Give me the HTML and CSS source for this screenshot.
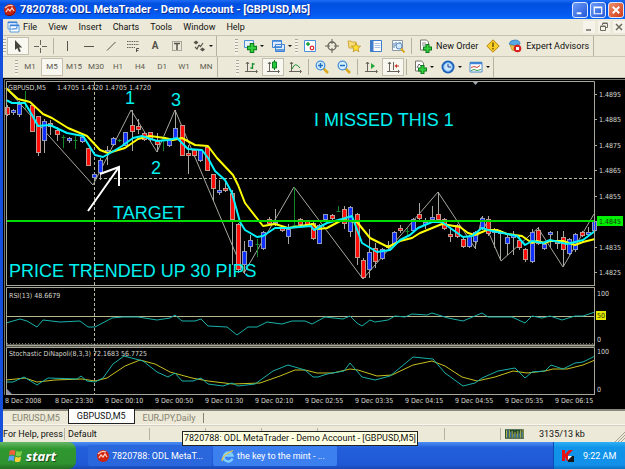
FILE: index.html
```html
<!DOCTYPE html>
<html lang="en">
<head>
<meta charset="utf-8">
<title>7820788: ODL MetaTrader - Demo Account - [GBPUSD,M5]</title>
<link rel="stylesheet" href="styles.css">
</head>
<body>
<div class="app">
  <header class="title-bar">
    <svg class="icon" viewBox="0 0 14 14"><circle cx="7" cy="7" r="6" fill="#c4200c"/><path d="M2 5q4-4 8-2M3 9l2-3 2 2 2-3 2 3" fill="none" stroke="#ffd0c0" stroke-width="1.3"/><path d="M2 11q5 4 10-2" fill="none" stroke="#701008"/></svg>
    <h1>7820788: ODL MetaTrader - Demo Account - [GBPUSD,M5]</h1>
    <button class="win" aria-label="Minimize"><svg viewBox="0 0 15 15"><path d="M4 11h5" stroke="#fff" stroke-width="2"/></svg></button>
    <button class="win" aria-label="Maximize"><svg viewBox="0 0 15 15"><path d="M3.5 4.500h8v7h-8zM3.500 5h8" fill="none" stroke="#fff" stroke-width="1.300"/></svg></button>
    <button class="win close" aria-label="Close"><svg viewBox="0 0 15 15"><path d="M4 4l7 7M11 4l-7 7" stroke="#fff" stroke-width="2"/></svg></button>
  </header>

  <div class="frame">
    <nav class="menu-bar">
      <svg class="icon" viewBox="0 0 14 14"><path d="M2 2h9v7h-9zM4 5h9v7h-9z" fill="#fff" stroke="#5b9be0"/><path d="M2 2.500h9M4 5.500h9" stroke="#3a82dc" stroke-width="1.500"/><path d="M6 10l2-2 1 1 2-2" fill="none" stroke="#6aa3e0"/></svg>
      <button>File</button><button>View</button><button>Insert</button><button>Charts</button><button>Tools</button><button>Window</button><button>Help</button>
      <div class="mdi">
        <button aria-label="Minimize chart"><svg viewBox="0 0 12 12"><path d="M3 9h5" stroke="#6d6a5c" stroke-width="1.500"/></svg></button>
        <button aria-label="Restore chart"><svg viewBox="0 0 12 12"><path d="M4.500 4V2.500h5v4H8M2.500 5.500h5v4h-5zM2.500 5h5M4.500 2h5" fill="none" stroke="#6d6a5c"/></svg></button>
        <button aria-label="Close chart"><svg viewBox="0 0 12 12"><path d="M3 3l6 6M9 3l-6 6" stroke="#6d6a5c" stroke-width="1.500"/></svg></button>
      </div>
    </nav>

    <div class="toolbar">
      <div class="group">
        <i class="grip"></i>
        <button class="tool on" aria-label="Cursor"><svg class="icon" viewBox="0 0 14 14"><path d="M4 1v10l2.300-2 1.700 4 1.800-.8L8 8.500h3.200z" fill="#454540"/></svg></button>
        <button class="tool" aria-label="Crosshair"><svg class="icon" viewBox="0 0 14 14"><path d="M7.500 1v5M7.500 9v5M1 7.500h5M9 7.500h5" stroke="#66645a"/></svg></button>
        <i class="sep"></i>
        <button class="tool" aria-label="Vertical line"><svg class="icon" viewBox="0 0 14 14"><path d="M7.500 2v10" stroke="#55534a"/></svg></button>
        <button class="tool" aria-label="Horizontal line"><svg class="icon" viewBox="0 0 14 14"><path d="M2 7.500h10" stroke="#55534a"/></svg></button>
        <button class="tool" aria-label="Trendline"><svg class="icon" viewBox="0 0 14 14"><path d="M3 11.500L11.500 3" stroke="#55534a"/></svg></button>
        <button class="tool" aria-label="Fibonacci"><svg class="icon" viewBox="0 0 14 14"><path d="M1 2.500h12M1 5.500h12M1 8.500h8" stroke="#66645a" stroke-dasharray="1.500 .8"/><path d="M10.500 13V9.500H13M10.500 11.500h2" fill="none" stroke="#55534a"/></svg></button>
        <button class="tool" aria-label="Text"><b class="glyph">A</b></button>
        <button class="tool" aria-label="Text label"><svg class="icon" viewBox="0 0 14 14"><path d="M2.500 2.500h9v9h-9z" fill="none" stroke="#66645a" stroke-dasharray="1 1"/><path d="M4 4.500h6M7 4.500V11" stroke="#55534a" stroke-width="1.500"/></svg></button>
        <button class="tool drop" aria-label="Arrows"><svg class="icon" viewBox="0 0 14 14"><path d="M1.500 3.500L4 1.500l2.500 2L4 5.500zM8 10.500l2.500-2 2.500 2-2.500 2z" fill="#55534a"/><path d="M3 8l2 2 2-4M7 6l1.500 1.500L11 4" fill="none" stroke="#55534a" stroke-width="1.200"/></svg><i class="caret"></i></button>
        <i class="edge"></i>
      </div>
      <div class="group">
        <i class="grip"></i>
        <button class="tool drop" aria-label="New chart"><svg class="icon" viewBox="0 0 14 14"><path d="M1.500 1.500h9v7h-9z" fill="#e8f2ff" stroke="#4a8ed8"/><path d="M9 4v10M4 9h10" stroke="#0a7a18" stroke-width="4.500"/><path d="M9 5v8M5 9h8" stroke="#35d040" stroke-width="2.500"/></svg><i class="caret"></i></button>
        <button class="tool drop" aria-label="Profiles"><svg class="icon" viewBox="0 0 14 14"><path d="M1.500 1.500h9v7h-9zM4.500 5.500h9v7h-9z" fill="#dcebff" stroke="#3f84d4"/><path d="M1.500 2h9M3 8h8M4.500 11h9" stroke="#3f84d4" stroke-width="1.500"/></svg><i class="caret"></i></button>
        <i class="grip"></i>
        <button class="tool" aria-label="Market watch"><svg class="icon" viewBox="0 0 14 14"><path d="M1.500 1.500h11v11h-11z" fill="#fff" stroke="#4a90dd"/><path d="M5 3v4M3 5h4" stroke="#12a030" stroke-width="1.500"/><circle cx="9" cy="9" r="1.800" fill="none" stroke="#e03030" stroke-width="1.300"/></svg></button>
        <button class="tool" aria-label="Data window"><svg class="icon" viewBox="0 0 14 14"><circle cx="7" cy="7" r="4" fill="none" stroke="#66645a" stroke-width="1.300"/><path d="M7 0v5M7 9v5M0 7h5M9 7h5" stroke="#66645a"/></svg></button>
        <button class="tool" aria-label="Navigator"><svg class="icon" viewBox="0 0 14 14"><path d="M1 2h3l1 1h4v6H2z" fill="#f8dc78" stroke="#c79b28" stroke-width=".8"/><path d="M9 4l1.300 3 3.300.2-2.500 2.200.8 3.300L9 11l-2.900 1.700.8-3.300-2.500-2.200 3.300-.2z" fill="#ffe030" stroke="#b48a10" stroke-width=".7"/></svg></button>
        <button class="tool" aria-label="Terminal"><svg class="icon" viewBox="0 0 14 14"><path d="M1.500 1.500h11v11h-11z" fill="#fff" stroke="#3f7dca"/><path d="M3 1v12" stroke="#3f7dca" stroke-width="3"/><path d="M5.500 4.500h6M5.500 6.500h6M5.500 8.500h6" stroke="#aac4e0"/></svg></button>
        <button class="tool" aria-label="Strategy tester"><svg class="icon" viewBox="0 0 14 14"><path d="M1.500 1.500h10v10h-10z" fill="#f4f6f8" stroke="#8b98a6"/><path d="M3 4v5M5 3v4M9 3v3" stroke="#5080b0"/><circle cx="8" cy="7" r="3" fill="#d2e8ff" stroke="#568bc4"/><path d="M10 9.500l3.500 4" stroke="#d8a820" stroke-width="2"/></svg></button>
        <i class="sep"></i>
        <button class="tool wide"><svg class="icon" viewBox="0 0 14 14"><path d="M2.500 1h6l2 2v8h-8z" fill="#fff" stroke="#77756a"/><path d="M4 4h4M4 6h4" stroke="#888"/><path d="M9.500 5v9M5 9.500h9" stroke="#0a7a18" stroke-width="4"/><path d="M9.500 6v7M6 9.500h7" stroke="#35d040" stroke-width="2"/></svg><span>New Order</span></button>
        <button class="tool" aria-label="Alerts"><svg class="icon" viewBox="0 0 14 14"><path d="M7 .8L13.200 7 7 13.200.8 7z" fill="#f8cf28" stroke="#b78410"/><path d="M7 3.500v4.500M7 9v1.500" stroke="#6b4c05" stroke-width="1.400"/></svg></button>
        <button class="tool wide"><svg class="icon" viewBox="0 0 14 14"><path d="M1 5q1-4 6-4t5 4q-5 3-11 0" fill="#58a8e8" stroke="#2c74b4" stroke-width=".7"/><path d="M2 6q4 2 8 0v3q-3 4-6 2z" fill="#f0c040" stroke="#b28a20" stroke-width=".7"/><circle cx="9.500" cy="9.500" r="3.800" fill="#d82020"/><path d="M8 8h3v3H8z" fill="#fff"/></svg><span>Expert Advisors</span></button>
        <i class="edge"></i>
      </div>
    </div>

    <div class="toolbar">
      <div class="group periods">
        <i class="grip"></i>
        <button class="tool">M1</button><button class="tool on">M5</button><button class="tool">M15</button><button class="tool">M30</button><button class="tool">H1</button><button class="tool">H4</button><button class="tool">D1</button><button class="tool">W1</button><button class="tool">MN</button>
        <i class="edge"></i>
      </div>
      <div class="group">
        <i class="grip"></i>
        <button class="tool" aria-label="Bar chart"><svg class="icon" viewBox="0 0 14 14"><path d="M3.500 2v10M1 11.500h12M12 10l1.500 1.500L12 13M2 4l1.500-2L5 4" fill="none" stroke="#66645a"/><path d="M8.500 3v6M8.500 4h2M6.500 8h2" stroke="#159030" stroke-width="1.300"/></svg></button>
        <button class="tool on" aria-label="Candlesticks"><svg class="icon" viewBox="0 0 14 14"><path d="M3.500 2v10M1 11.500h12M12 10l1.500 1.500L12 13M2 4l1.500-2L5 4" fill="none" stroke="#66645a"/><path d="M8.500 0v10" stroke="#0c8020"/><path d="M6.500 2h4v6h-4z" fill="#28c840" stroke="#0c8020"/></svg></button>
        <button class="tool" aria-label="Line chart"><svg class="icon" viewBox="0 0 14 14"><path d="M3.500 2v10M1 11.500h12M12 10l1.500 1.500L12 13M2 4l1.500-2L5 4" fill="none" stroke="#66645a"/><path d="M4 9q3-8 8-1" fill="none" stroke="#159030"/></svg></button>
        <i class="sep"></i>
        <button class="tool" aria-label="Zoom in"><svg class="icon" viewBox="0 0 14 14"><path d="M8.500 8.500l4.500 4.500" stroke="#d8a820" stroke-width="2.500"/><circle cx="5.500" cy="5.500" r="4.300" fill="#d8efff" stroke="#4890d8" stroke-width="1.300"/><path d="M3 5.500h5M5.500 3v5" stroke="#2070c0" stroke-width="1.500"/></svg></button>
        <button class="tool" aria-label="Zoom out"><svg class="icon" viewBox="0 0 14 14"><path d="M8.500 8.500l4.500 4.500" stroke="#d8a820" stroke-width="2.500"/><circle cx="5.500" cy="5.500" r="4.300" fill="#d8efff" stroke="#4890d8" stroke-width="1.300"/><path d="M3 5.500h5" stroke="#2070c0" stroke-width="1.500"/></svg></button>
        <i class="sep"></i>
        <button class="tool" aria-label="Auto scroll"><svg class="icon" viewBox="0 0 14 14"><path d="M3.500 2v10M1 11.500h12M12 10l1.500 1.500L12 13M2 4l1.500-2L5 4" fill="none" stroke="#66645a"/><path d="M7 3l4 3-4 3z" fill="#20a838"/></svg></button>
        <button class="tool on" aria-label="Chart shift"><svg class="icon" viewBox="0 0 14 14"><path d="M3.500 2v10M1 11.500h12M12 10l1.500 1.500L12 13M2 4l1.500-2L5 4M7.500 2v8" fill="none" stroke="#66645a"/><path d="M13 6h-3" stroke="#c83020"/><path d="M8.500 6l2.500-2v4z" fill="#c83020"/></svg></button>
        <i class="sep"></i>
        <button class="tool drop" aria-label="Indicators"><svg class="icon" viewBox="0 0 14 14"><path d="M2.500 1h6l2 2v8h-8z" fill="#fff" stroke="#77756a"/><path d="M4 8l2-4 2 2" fill="none" stroke="#666"/><path d="M9.500 5v9M5 9.500h9" stroke="#0a7a18" stroke-width="4"/><path d="M9.500 6v7M6 9.500h7" stroke="#35d040" stroke-width="2"/></svg><i class="caret"></i></button>
        <button class="tool drop" aria-label="Periods"><svg class="icon" viewBox="0 0 14 14"><circle cx="7" cy="7" r="6.500" fill="#1c60b8"/><circle cx="7" cy="7" r="4.300" fill="#c8e4ff" stroke="#70b0f0"/><path d="M7 4v3h3" fill="none" stroke="#1c4080"/></svg><i class="caret"></i></button>
        <button class="tool drop" aria-label="Templates"><svg class="icon" viewBox="0 0 14 14"><path d="M1 2.500h12v9.500H1z" fill="#fff" stroke="#4a88cc"/><path d="M1 3h12" stroke="#3f84d4" stroke-width="2.500"/><path d="M2 7.500l3-1 3 1 3-2" fill="none" stroke="#d04030"/><path d="M2 10.500l3-1 3 1 4-1" fill="none" stroke="#30a040"/></svg><i class="caret"></i></button>
        <i class="edge"></i>
      </div>
    </div>

    <main class="chart">
      <svg class="plot" viewBox="3 78 622 317" role="img" aria-label="GBPUSD M5 chart">
        <path class="rim" d="M4.500 395V79.500H625"/>
        <g class="dashes">
          <path d="M94.500 82V286M94.500 288V345M94.500 348V394"/>
          <path d="M94 178.500H594"/>
        </g>
        <path class="zigzag" d="M6 88L93 185L131 110L157 152L175 110L244 273L294 187L363 279L438 192L475 248L482 217L501 261L538 228L563 267L594 214"/>
        <g id="candles"></g>
        <path class="note-arrow" d="M88 211L119 167M100 174L119 167V186"/>
        <path class="ma slow" d="M6 88L18 99L30 102L43 114L52 118L68 128L87 136L100 150L108 153L125 148L138 139L150 136L165 138L173 140L182 138L195 145L208 146L217 158L233 175L238 185L245 203L263 226L275 224L288 228L313 224L318 229L327 228L342 220L357 222L370 238L388 247L400 241L412 238L420 233L442 224L460 227L468 233L475 235L487 230L497 230L507 234L522 236L532 243L537 241L545 243L550 241L563 241L575 245L583 242L595 239"/>
        <path class="ma fast" d="M6 100L12 103L25 103L32 115L38 126L50 125L67 133L83 136L95 155L103 157L112 152L122 146L133 138L142 136L157 141L168 140L177 138L188 149L202 150L208 158L215 171L225 180L232 193L240 222L245 230L257 237L263 236L275 228L288 228L311 226L314 230L327 223L342 219L352 216L362 243L377 252L390 250L400 240L410 235L418 228L432 222L442 222L453 230L463 237L472 236L482 228L488 230L517 236L525 245L532 241L543 243L550 240L567 244L583 240L595 231"/>
        <path class="bid" d="M7 221H595"/>
        <path class="shift" d="M472 81h7l-3.500 4z"/>

        <g class="notes">
          <text x="125" y="104">1</text>
          <text x="171" y="106">3</text>
          <text x="151" y="174">2</text>
          <text x="314" y="126">I MISSED THIS 1</text>
          <text x="113" y="219">TARGET</text>
          <text x="9" y="277">PRICE TRENDED UP 30 PIPS</text>
        </g>

        <path class="level" d="M7 316.500H595"/>
        <path class="dots" d="M7 343.500H595"/>
        <path class="osc" d="M6 323L20 319L27 321L37 327L43 320L60 322L80 321L88 327L95 327L112 318L123 317L138 317L157 320L170 318L175 315L182 321L195 321L201 319L208 326L227 327L237 335L248 327L257 327L267 322L282 324L292 321L305 321L312 324L325 317L343 319L350 316L357 323L362 326L370 320L375 322L388 320L395 316L405 317L412 314L427 315L432 313L448 318L463 321L482 313L488 317L512 317L525 323L532 316L542 318L550 316L562 320L575 316L583 316L595 312"/>
        <path class="osc signal" d="M6 380L25 378L37 382L55 380L82 379L95 381L107 378L125 366L140 360L155 364L170 372L192 378L208 381L233 384L260 383L280 376L295 370L305 370L317 373L333 373L350 369L358 370L377 376L392 375L413 365L432 361L445 366L462 377L477 381L495 377L513 371L527 373L545 371L553 369L567 369L583 365L595 360"/>
        <path class="osc" d="M6 382L13 382L24 377L37 385L48 378L77 379L81 376L87 381L95 382L103 378L113 364L124 356L143 361L157 372L168 377L175 373L182 381L193 381L201 378L208 384L223 386L232 383L238 386L255 384L273 371L288 365L305 370L313 377L318 377L327 374L344 371L350 363L362 377L375 380L390 376L413 357L433 359L445 373L463 386L475 383L482 378L498 371L515 368L525 378L532 372L545 371L551 365L563 369L575 363L583 362L595 356"/>

        <path class="border" d="M6.500 286V81.500H594.500V286M6 285.500H595M6.500 345V287.500H594.500V345M6.500 394V347.500H594.500V394M6 394.500H595"/>
        <path class="splitter" d="M6 345.500H595"/>
        <path class="border" d="M595 94.500h2M595 119.500h2M595 145.500h2M595 170.500h2M595 196.500h2M595 247.500h2M595 272.500h2"/>
        <path class="corner" d="M7 389l5 5H7z"/>

        <g class="labels">
          <text x="8" y="90">GBPUSD,M5</text>
          <text x="57" y="90">1.4705 1.4720 1.4705 1.4720</text>
          <text x="9" y="298">RSI(13) 48.6679</text>
          <text x="9" y="356">Stochastic DiNapoli(8,3,3) 72.1683 56.7725</text>
          <text x="599" y="97">1.4895</text>
          <text x="599" y="122">1.4885</text>
          <text x="599" y="148">1.4875</text>
          <text x="599" y="173">1.4865</text>
          <text x="599" y="199">1.4855</text>
          <rect class="bid-tag" x="597" y="216" width="26" height="10"/>
          <text class="dark" x="599" y="224">1.4845</text>
          <text x="599" y="250">1.4835</text>
          <text x="599" y="275">1.4825</text>
          <text x="597" y="296">100</text>
          <rect class="level-tag" x="596" y="311" width="10" height="9"/>
          <text class="dark" x="597" y="318">50</text>
          <text x="597" y="342">0</text>
          <text x="597" y="354">100</text>
          <text x="597" y="392">0</text>
        </g>
      </svg>
      <div class="time-axis">
        <span>8 Dec 2008</span><span>8 Dec 23:30</span><span>9 Dec 00:10</span><span>9 Dec 00:50</span><span>9 Dec 01:30</span><span>9 Dec 02:10</span><span>9 Dec 02:55</span><span>9 Dec 03:35</span><span>9 Dec 04:15</span><span>9 Dec 04:55</span><span>9 Dec 05:35</span><span>9 Dec 06:15</span>
      </div>
    </main>

    <div class="tabs">
      <button>EURUSD,M5</button><button class="active">GBPUSD,M5</button><button>EURJPY,Daily</button><i class="tab-end"></i>
      <div class="scrollers"><button class="prev" aria-label="Previous tab"></button><button class="next" aria-label="Next tab"></button></div>
    </div>

    <footer class="status">
      <span class="help">For Help, press</span>
      <span class="profile">Default</span>
      <span class="cell"></span><span class="cell"></span><span class="cell"></span><span class="cell fill"></span><span class="cell"></span>
      <span class="traffic">
        <svg viewBox="0 0 20 10"><path d="M0 5h20" stroke="#244a30" stroke-width="10"/><path d="M1.500 1v8M4.500 1v8M7.500 2v7M10.500 3v6M13.500 2v7M16.500 1v8M19 0v9" stroke="#c8c050"/><path d="M3 1v8M6 3v6M9 5v4M12 5v4M15 4v5M18 3v6" stroke="#4080c0"/></svg>
        3135/13 kb
      </span>
      <svg class="resize" viewBox="0 0 10 10"><path d="M0 10L10 0M3 10l7-7M6 10l4-4" stroke="#a5a294"/></svg>
      <div class="tip" role="tooltip">7820788: ODL MetaTrader - Demo Account - [GBPUSD,M5]</div>
    </footer>
  </div>

  <div class="taskbar">
    <button class="start">
      <svg viewBox="0 0 16 16"><path d="M2 3q3-2 6 0L7 8Q4 6 1 8z" fill="#f0603c"/><path d="M9 3q3 2 6 0l-1 5q-3 2-6 0z" fill="#7ed048"/><path d="M1 9q3-2 6 0l-1 5q-3-2-6 0z" fill="#5aa0f8"/><path d="M8 9q3 2 6 0l-1 5q-3 2-6 0z" fill="#f8d038"/></svg>
      start
    </button>
    <button class="task current"><svg class="icon" viewBox="0 0 14 14"><circle cx="7" cy="7" r="6" fill="#d0240e"/><path d="M2 5q4-4 8-2M3 9l2-3 2 2 2-3 2 3" fill="none" stroke="#ffd0c0" stroke-width="1.300"/></svg><span>7820788: ODL MetaT...</span></button>
    <button class="task"><svg class="icon" viewBox="0 0 14 14"><path d="M11.500 9.500A4.500 4.500 0 1 1 11.500 6.500H4" fill="none" stroke="#80d0ff" stroke-width="2.300"/><path d="M1 12Q1 6 12 1.500" fill="none" stroke="#f0c840" stroke-width="1.300"/></svg><span>the key to the mint - ...</span></button>
    <div class="tray">
      <svg viewBox="0 0 12 12"><path d="M0 0h3v4l4-4h4L6 5l3 6H5L3 7v4H0z" fill="#e81010"/><path d="M6 6h6v6H6z" fill="#181818"/><path d="M6 6l4 0-4 4z" fill="#fff"/></svg>
      <time>9:22 AM</time>
    </div>
  </div>
</div>
<script src="chart.js"></script>
</body>
</html>
```
FILE: styles.css
```css
* { box-sizing: border-box; }

body {
  margin: 0;
  background: #0a50dc;
  font-family: Roboto, "Noto Sans", sans-serif;
  font-size: 9px;
  line-height: 12px;
  color: #111;
}

button {
  margin: 0;
  padding: 0;
  border: 0;
  background: none;
  font: inherit;
  color: inherit;
}

svg { display: block; }
.icon { width: 14px; height: 14px; flex: none; }

.app { display: flex; flex-direction: column; min-height: 100vh; }

.title-bar {
  display: flex;
  align-items: center;
  gap: 2px;
  height: 19px;
  padding: 0 1px 0 3px;
  background: linear-gradient(#1f6cf4, #0050e0 20%, #0458ee 70%, #0766fb);
}
.title-bar h1 {
  flex: 1;
  margin: 0 0 0 1px;
  overflow: hidden;
  white-space: nowrap;
  font: bold 11px/18px Roboto, "Open Sans", sans-serif;
  color: #fff;
  text-shadow: 1px 1px #0a2a90;
}
.win {
  width: 16px;
  height: 16px;
  border: 1px solid #dce8ff;
  border-radius: 3px;
  background: linear-gradient(135deg, #6c9bf8, #2358d8);
}
.win.close { background: linear-gradient(135deg, #f0906c, #d03a18); }

.frame {
  flex: 1;
  display: flex;
  flex-direction: column;
  border-left: 3px solid #1450dc;
  background: #ece9d8;
}

.menu-bar {
  display: flex;
  align-items: center;
  gap: 11px;
  height: 17px;
  padding-left: 3px;
  border-bottom: 1px solid #c5c2b2;
}
.menu-bar .icon { margin-right: -8px; }
.mdi { display: flex; gap: 3px; margin-left: auto; }
.mdi button { background: #f6f4ea; }
.mdi svg { width: 12px; height: 12px; }

.toolbar {
  display: flex;
  gap: 18px;
  height: 21px;
  border-bottom: 1px solid #c9c6b6;
}
.group { display: flex; align-items: center; }
.grip {
  width: 3px;
  height: 15px;
  margin-right: 1px;
  background: repeating-linear-gradient(#aba899 0 1px, #f6f4ea 1px 3px);
}
.periods { padding-left: 12px; color: #5d5b50; font-size: 8px; }
.sep, .edge { width: 1px; height: 16px; background: #b5b2a2; }
.sep { margin: 0 2px; }
.edge { height: 100%; }
.tool {
  display: flex;
  align-items: center;
  justify-content: center;
  width: 22px;
  height: 18px;
}
.tool.on { background: #f8f7f0; border: 1px solid #c2bfae; }
.tool.drop { width: 28px; }
.tool.wide { width: auto; gap: 4px; padding: 0 4px; white-space: nowrap; }
.caret { margin-left: 3px; border: 2px solid transparent; border-top-color: #111; border-bottom: 0; }
.glyph { font-size: 10px; color: #55534a; }

.chart { background: #000; }
.plot { width: 100%; height: auto; }
.rim { fill: none; stroke: #77756a; }
.border { fill: none; stroke: #a8a898; }
.splitter { stroke: #a8a898; stroke-width: 2; }
.dashes { stroke: #b8b8a0; stroke-dasharray: 3 2; }
.zigzag { fill: none; stroke: #a8a8a0; }
.ma { fill: none; stroke-width: 2; stroke-linejoin: round; }
.slow { stroke: #ffff00; }
.fast { stroke: #00f4ff; }
.bid { stroke: #00dc00; stroke-width: 2; }
.shift { fill: #a0a8b8; }
.note-arrow { fill: none; stroke: #fff; stroke-width: 2; }
.notes { fill: #00f0f0; font: 18px "Liberation Sans", Arial, sans-serif; }
.level { stroke: #b8b890; }
.dots { stroke: #77776a; stroke-dasharray: 1 2; }
.osc { fill: none; stroke: #18b0a8; }
.signal { stroke: #c8c020; }
.corner { fill: #8890a8; }
.labels { fill: #d8d8d0; font: 7px "DejaVu Sans Condensed", sans-serif; }
.labels .dark { fill: #103010; }
.bid-tag { fill: #00f000; }
.level-tag { fill: #e8e800; }

.wick { stroke: #a8a8a0; }
.up { fill: #1030ff; stroke: #9098c0; }
.down { fill: #ff0c08; stroke: #c09890; }
.doji { fill: none; stroke: #108828; }

.time-axis {
  display: grid;
  grid-template-columns: repeat(12, 50fr) 20fr;
  height: 14px;
  padding: 1px 0 0 2px;
  font: 7px/10px "DejaVu Sans Condensed", sans-serif;
  color: #d8d8d0;
  white-space: nowrap;
}

.tabs {
  display: flex;
  height: 16px;
  padding-left: 1px;
  border-top: 2px solid #8a887a;
  border-bottom: 1px solid #f8f6ee;
  color: #85836f;
}
.tabs button { padding: 0 8px; }
.tabs .active { margin-top: -2px; border: 1px solid #222; border-top: 0; background: #fff; color: #111; }
.tab-end { width: 1px; height: 10px; margin: 2px 0; background: #85836f; }
.scrollers { display: flex; align-items: center; gap: 10px; margin-left: auto; padding-right: 3px; }
.tabs .scrollers button { padding: 0; border: 3px solid transparent; }
.tabs .prev { border-left-width: 0; border-right-color: #99968a; }
.tabs .next { border-right-width: 0; border-left-color: #99968a; }

.status {
  position: relative;
  display: flex;
  align-items: center;
  flex: 1;
  min-height: 17px;
  border-top: 1px solid #d3d0c0;
  white-space: nowrap;
}
.help { width: 62px; overflow: hidden; border-right: 1px solid #b5b2a2; }
.profile { width: 85px; padding-left: 3px; border-right: 1px solid #b5b2a2; }
.cell { width: 56px; height: 12px; border-right: 1px solid #b5b2a2; }
.fill { flex: 1; }
.traffic { display: flex; align-items: center; gap: 15px; width: 106px; padding-left: 4px; }
.traffic svg { width: 19px; height: 10px; }
.resize { align-self: flex-end; width: 10px; height: 10px; margin-left: 8px; }
.tip {
  position: absolute;
  top: 5px;
  left: 179px;
  z-index: 2;
  padding: 0 1px;
  border: 1px solid #222;
  background: #ffffe1;
  line-height: 13px;
}

.taskbar {
  display: flex;
  align-items: center;
  height: 27px;
  background: linear-gradient(#4c90f4, #2460dc 20%, #2058d4 85%, #1a48b4);
  color: #fff;
}
.start {
  display: flex;
  align-items: center;
  gap: 3px;
  width: 76px;
  height: 27px;
  margin-right: 12px;
  padding-left: 8px;
  border-radius: 0 8px 8px 0;
  background: linear-gradient(#68b868, #309830 25%, #2f922f 80%, #226e22);
  font: italic bold 13px/24px "Open Sans", sans-serif;
  text-shadow: 1px 1px #1c4c1c;
}
.start svg { width: 15px; height: 15px; }
.task {
  display: flex;
  align-items: center;
  gap: 2px;
  width: 124px;
  height: 21px;
  margin-right: 1px;
  padding-left: 8px;
  border-radius: 2px;
  background: #3c80f0;
  white-space: nowrap;
}
.task.current { background: #2a66dc; }
.tray {
  display: flex;
  align-items: center;
  gap: 9px;
  align-self: stretch;
  width: 72px;
  margin-left: auto;
  padding-left: 8px;
  border-left: 1px solid #0c4cb0;
  background: linear-gradient(#30b0f8, #1094e8 20%, #1290ea 85%, #0c70c0);
  white-space: nowrap;
}
.tray svg { width: 12px; height: 12px; }
```
FILE: chart.js
```js
// One entry per five-minute bar: [kind, body top, body bottom, high, low].
// Kinds: u = up, d = down, x = unchanged.
const bars = [
  ["d",107,115,105,116],["u",110,113,109,115],["u",104,115,101,117],["x",100,100,91,109],
  ["d",105,132,105,132],["d",116,153,116,156],["u",121,141,119,153],["d",123,127,120,135],
  ["d",130,135,127,141],["x",137,137,135,148],["u",138,141,137,143],["x",140,140,136,149],
  ["u",137,142,136,143],["d",148,166,148,166],["u",174,178,172,181],["u",160,173,158,180],
  ["u",150,153,146,165],["u",138,145,137,146],["x",140,140,139,142],["u",132,146,132,146],
  ["d",125,132,110,151],["d",126,130,119,134],["d",133,140,132,141],["d",132,140,132,141],
  ["d",141,145,133,152],["x",139,139,136,151],["u",140,146,138,147],["u",128,139,110,140],
  ["d",125,156,125,156],["d",153,156,145,174],["d",150,156,149,157],["u",150,161,149,162],
  ["d",147,171,145,171],["d",174,189,174,201],["u",190,193,180,195],["d",188,191,181,192],
  ["d",193,220,190,265],["d",224,270,223,273],["u",251,265,241,274],["u",240,247,235,252],
  ["x",244,244,239,257],["u",232,249,231,250],["d",219,224,217,225],["u",222,225,209,226],
  ["d",228,231,227,232],["u",229,237,224,244],["x",225,225,187,225],["d",219,225,218,226],
  ["d",221,225,221,225],["d",223,239,222,240],["u",225,244,224,244],["u",214,220,214,221],
  ["d",215,219,214,220],["x",211,211,206,212],["d",209,224,206,229],["u",207,232,206,237],
  ["d",214,258,213,265],["d",260,278,258,279],["u",252,270,229,278],["d",248,262,243,268],
  ["u",249,259,248,260],["u",245,247,241,250],["u",232,244,231,244],["d",228,230,225,233],
  ["x",231,231,228,235],["u",219,231,218,232],["d",214,219,203,222],["u",222,225,218,229],
  ["u",217,219,206,222],["d",214,220,192,222],["d",219,229,218,230],["d",234,237,229,242],
  ["d",225,237,224,238],["d",239,247,238,248],["u",236,247,235,248],["u",232,242,231,249],
  ["u",218,228,216,230],["d",219,234,216,236],["u",230,231,228,248],["u",231,233,230,260],
  ["u",237,244,234,255],["u",235,237,231,255],["d",240,248,236,250],["d",249,260,248,262],
  ["u",232,262,229,263],["d",230,244,227,245],["u",244,249,242,250],["u",232,234,231,247],
  ["d",241,243,231,249],["d",237,250,231,266],["u",239,254,238,255],["u",234,250,233,252],
  ["d",232,236,231,237],["u",232,234,227,236],["u",221,231,214,231]
];

const step = 6.25;
const firstX = 6.5;
const layer = document.getElementById("candles");

function add(tag, attrs) {
  const node = document.createElementNS("http://www.w3.org/2000/svg", tag);
  for (const name in attrs) node.setAttribute(name, attrs[name]);
  layer.appendChild(node);
}

bars.forEach(([kind, top, bottom, high, low], i) => {
  const x = Math.round(firstX + i * step) + 0.5;
  if (kind === "x") {
    add("path", { class: "doji", d: `M${x} ${high}V${low}M${x - 2} ${top + 0.5}h4` });
    return;
  }
  add("path", { class: "wick", d: `M${x} ${high}V${low}` });
  add("rect", {
    class: kind === "u" ? "up" : "down",
    x: x - 2, y: top + 0.5, width: 4, height: Math.max(bottom - top - 1, 2)
  });
});
```
